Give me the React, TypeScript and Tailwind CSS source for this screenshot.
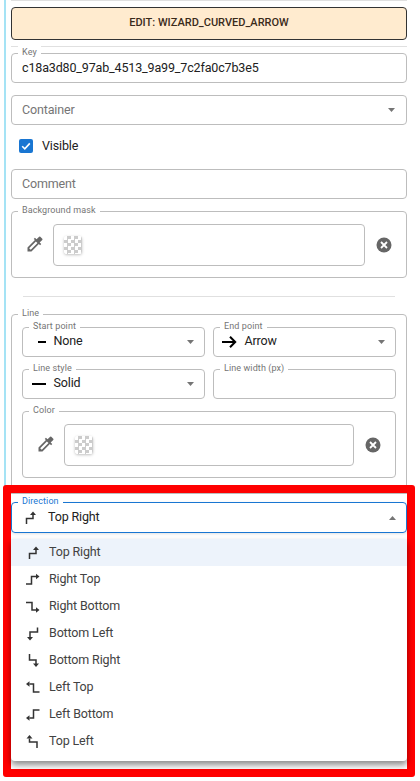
import { ReactNode } from 'react'

const directions = [
  { label: 'Top Right', d: 'M3.5 13V7.5H10V3', head: 'M10 0.5L7 4h6z' },
  { label: 'Right Top', d: 'M0 11H5.5V3.5H10', head: 'M13.5 3.5L10 0.7v5.6z' },
  { label: 'Right Bottom', d: 'M0 2.5H6V10H10', head: 'M13.5 10L10 7.2v5.6z' },
  { label: 'Bottom Left', d: 'M11.5 0.5V5H4V10', head: 'M4 13.5L1 10h6z' },
  { label: 'Bottom Right', d: 'M3.5 0V6H10V10', head: 'M10 13L7 9.5h6z' },
  { label: 'Left Top', d: 'M13.5 11H7.5V3H3.5', head: 'M0 3L3.5 0.2v5.6z' },
  { label: 'Left Bottom', d: 'M13.5 2H7.5V10H3.5', head: 'M0 10L3.5 7.2v5.6z' },
  { label: 'Top Left', d: 'M11 13V7H3.5V3.5', head: 'M3.5 0L0.5 3.5h6z' },
]

function StepIcon({ d, head }: { d: string; head: string }) {
  return (
    <svg width="14" height="14" viewBox="0 0 14 14" className="shrink-0 text-[#333333]">
      <path d={d} fill="none" stroke="currentColor" strokeWidth="1.5" />
      <path d={head} fill="currentColor" />
    </svg>
  )
}

function Caret({ up }: { up?: boolean }) {
  return (
    <svg width="7" height="4" viewBox="0 0 7 4" className="shrink-0 text-[#757575]">
      <path d={up ? 'M0 4l3.5-4 3.5 4z' : 'M0 0l3.5 4 3.5-4z'} fill="currentColor" />
    </svg>
  )
}

function Field({ label, className, children, focus }: { label?: string; className?: string; children?: ReactNode; focus?: boolean }) {
  return (
    <div className={`relative rounded border ${focus ? 'border-[#1976d2]' : 'border-[#bdbdbd]'} ${className ?? ''}`}>
      {label && (
        <span className={`absolute -top-[8px] left-[6px] bg-white px-[4px] text-[9px] leading-[12px] tracking-[0.1px] ${focus ? 'text-[#1976d2]' : 'text-[#757575]'}`}>
          {label}
        </span>
      )}
      {children}
    </div>
  )
}

function Eyedropper() {
  return (
    <svg width="20" height="20" viewBox="0 0 24 24" className="-mt-px shrink-0 text-[#666666]">
      <path
        fill="currentColor"
        d="M20.71 5.63l-2.34-2.34a1 1 0 0 0-1.41 0l-3.12 3.12-1.93-1.91-1.41 1.41 1.42 1.42L3 16.25V21h4.75l8.92-8.92 1.42 1.42 1.41-1.41-1.92-1.92 3.12-3.12a1 1 0 0 0 .01-1.42zM6.92 19L5 17.08l8.06-8.06 1.92 1.92L6.92 19z"
      />
    </svg>
  )
}

function ClearIcon() {
  return (
    <svg width="16" height="16" viewBox="0 0 16 16" className="shrink-0">
      <circle cx="8" cy="8" r="7.5" fill="#666666" />
      <path d="M5 5l6 6M11 5l-6 6" stroke="white" strokeWidth="1.8" />
    </svg>
  )
}

function Swatch() {
  return (
    <div className="h-[18px] w-[18px] rounded-[3px] bg-[repeating-conic-gradient(#cccccc_0%_25%,#ffffff_0%_50%)] bg-[length:7px_7px] shadow-[0_1px_3px_rgba(0,0,0,0.25)]" />
  )
}

function ColorField({ label, width }: { label: string; width: string }) {
  return (
    <Field label={label} className="h-[67px]">
      <div className="flex h-full items-center pl-[13px]">
        <Eyedropper />
        <div className={`ml-[8px] flex h-[42px] items-center rounded border border-[#bdbdbd] pl-[10px] ${width}`}>
          <Swatch />
        </div>
        <div className="ml-[11px]">
          <ClearIcon />
        </div>
      </div>
    </Field>
  )
}

function SelectField({ label, value, icon }: { label: string; value: string; icon: ReactNode }) {
  return (
    <Field label={label} className="h-[30px] flex-1">
      <div className="flex h-full items-center pl-[9px] pr-[10px] text-[12.5px] tracking-[-0.15px] text-[#212121]">
        <span className="flex w-[21.5px] shrink-0 items-center">{icon}</span>
        <span className="-mt-[2px] flex-1">{value}</span>
        <Caret />
      </div>
    </Field>
  )
}

export default function App() {
  return (
    <div className="relative h-[781px] w-[420px] overflow-hidden bg-white font-['Roboto',sans-serif]">
      <div className="absolute left-[4px] top-0 h-[490px] w-[2px] bg-[#a5e3f5]" />
      <div className="pl-[11px] pr-[13px]">
        <div className="h-px bg-[#e0e0e0]" />
        <div className="mt-[6px] flex h-[33px] items-center justify-center rounded border border-[#333333] bg-[#ffebcf] text-[11px] font-medium text-[#3a2a1a]">
          EDIT: WIZARD_CURVED_ARROW
        </div>
        <div className="mt-[6px] h-px bg-[#e0e0e0]" />

        <Field label="Key" className="mt-[6px] h-[30px]">
          <div className="flex h-full items-center pl-[10px] text-[12.5px] tracking-[-0.15px] text-[#212121]">c18a3d80_97ab_4513_9a99_7c2fa0c7b3e5</div>
        </Field>
        <Field className="mt-[12px] h-[30px]">
          <div className="flex h-full items-center justify-between pl-[10px] pr-[11px] text-[12.5px] tracking-[-0.15px] text-[#757575]">
            Container
            <Caret />
          </div>
        </Field>
        <div className="mt-[14px] flex h-[14px] items-center pl-[8px] text-[12.5px] tracking-[-0.15px] text-[#212121]">
          <div className="flex h-[14px] w-[14px] items-center justify-center rounded-[2px] bg-[#1976d2]">
            <svg width="12" height="12" viewBox="0 0 12 12">
              <path d="M2.2 6.2l2.6 2.6 5-5.4" fill="none" stroke="white" strokeWidth="1.6" />
            </svg>
          </div>
          <span className="ml-[9px]">Visible</span>
        </div>
        <Field className="mt-[16px] h-[30px]">
          <div className="flex h-full items-center pl-[10px] text-[12.5px] tracking-[-0.15px] text-[#757575]">Comment</div>
        </Field>
        <div className="mt-[12px]">
          <ColorField label="Background mask" width="w-[312px]" />
        </div>
        <div className="mx-[12px] mt-[18px] h-px bg-[#e0e0e0]" />

        <Field label="Line" className="mt-[17px] h-[190px] px-[10px] pt-[12px]">
          <div className="flex gap-[8px]">
            <SelectField label="Start point" value="None" icon={<div className="ml-[6px] h-[2px] w-[8px] bg-black" />} />
            <SelectField
              label="End point"
              value="Arrow"
              icon={
                <svg width="15" height="14" viewBox="0 0 15 14" className="-ml-[1px] text-black">
                  <path d="M0 7h13M8 1.8L13.2 7 8 12.2" fill="none" stroke="currentColor" strokeWidth="2" />
                </svg>
              }
            />
          </div>
          <div className="mt-[12px] flex gap-[8px]">
            <SelectField label="Line style" value="Solid" icon={<div className="h-[2px] w-[14px] bg-black" />} />
            <Field label="Line width (px)" className="h-[30px] flex-1" />
          </div>
          <div className="mt-[12px]">
            <ColorField label="Color" width="w-[290px]" />
          </div>
        </Field>
      </div>

      <div className="absolute left-[3px] top-[485px] h-[292px] w-[412px] rounded-[3px] border-[8px] border-[#ff0000] bg-white">
        <div className="h-px bg-[#bdbdbd]" />
        <Field label="Direction" focus className="mt-[8px] h-[31px] shadow-[0_1px_3px_rgba(0,0,0,0.12)]">
          <div className="flex h-full items-center pl-[11px] pr-[10px] text-[12.5px] tracking-[-0.15px] text-[#212121]">
            <StepIcon d={directions[0].d} head={directions[0].head} />
            <span className="ml-[11px] flex-1">Top Right</span>
            <Caret up />
          </div>
        </Field>
        <div className="mt-[6px] rounded-b bg-white pb-[6px] shadow-[0_4px_6px_rgba(0,0,0,0.45)]">
          {directions.map((item, i) => (
            <div key={item.label} className={`flex h-[27px] items-center pl-[15px] text-[12.5px] tracking-[-0.15px] text-[#424242] ${i === 0 ? 'bg-[#edf3fb]' : ''}`}>
              <StepIcon d={item.d} head={item.head} />
              <span className="ml-[9px]">{item.label}</span>
            </div>
          ))}
        </div>
      </div>
    </div>
  )
}
